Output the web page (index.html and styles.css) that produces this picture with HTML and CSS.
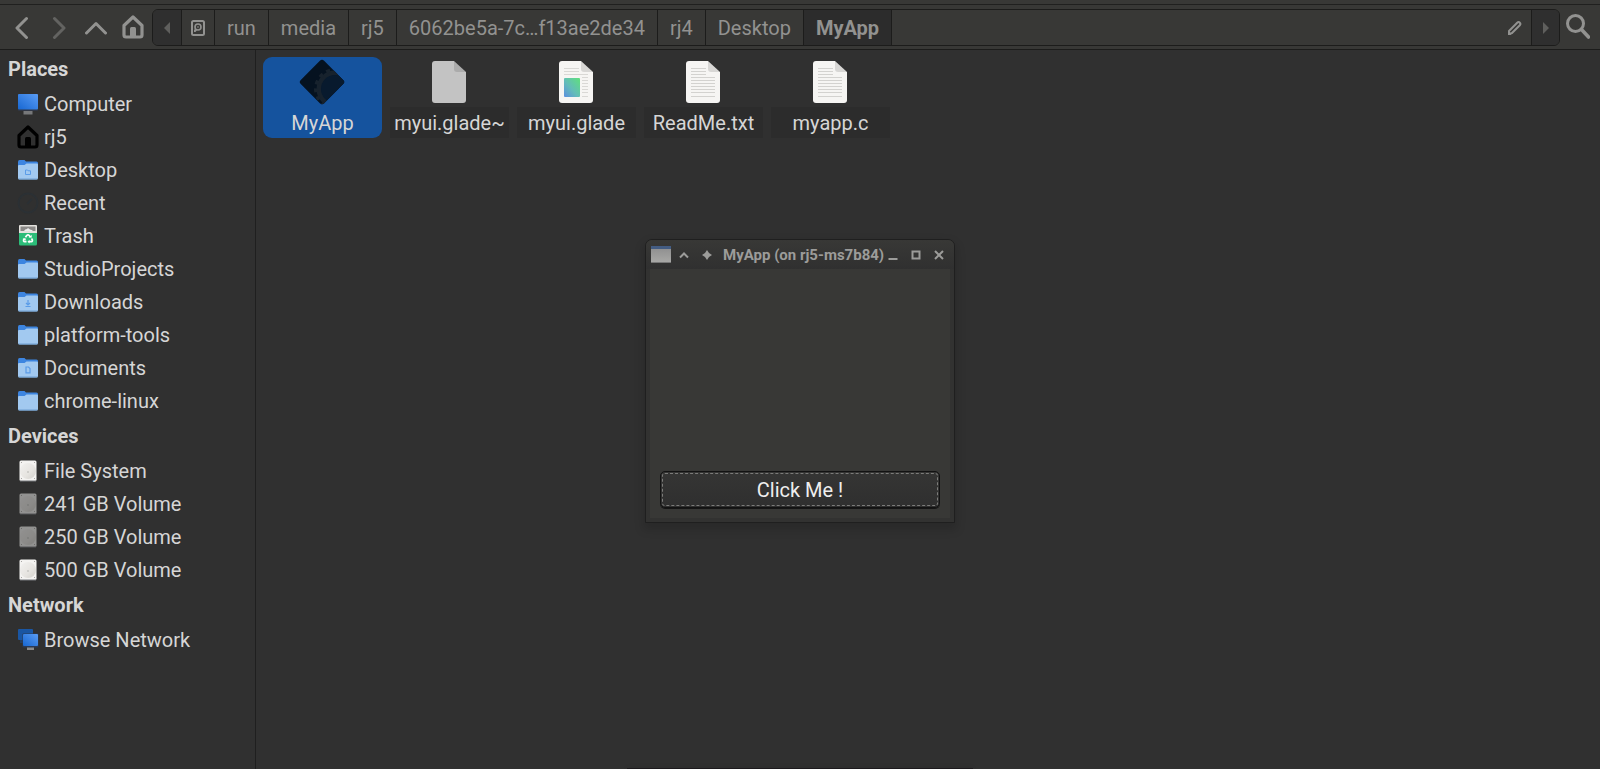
FILE: index.html
```html
<!DOCTYPE html>
<html lang="en">
<head>
<meta charset="utf-8">
<title>MyApp</title>
<link rel="stylesheet" href="styles.css">
</head>
<body>
<svg class="defs" aria-hidden="true">
  <defs>
    <linearGradient id="screen" x1="0" y1="1" x2="1" y2="0"><stop offset="0" stop-color="#1767d2"/><stop offset="1" stop-color="#5a9cf4"/></linearGradient>
    <linearGradient id="picture" x1="0" y1="1" x2="1" y2="0"><stop offset="0" stop-color="#5b8fe0"/><stop offset=".45" stop-color="#63bdb8"/><stop offset="1" stop-color="#5fe07c"/></linearGradient>
    <linearGradient id="winfill" x1="0" y1="0" x2="0" y2="1"><stop offset="0" stop-color="#8c8c8c"/><stop offset="1" stop-color="#a9a9a7"/></linearGradient>
    <linearGradient id="plate" x1="0" y1="0" x2="1" y2="1"><stop offset="0" stop-color="#f2f1ef"/><stop offset=".6" stop-color="#e6e4e0"/><stop offset="1" stop-color="#d2d0cb"/></linearGradient>
    <clipPath id="diamond"><rect x="6.500" y="6.500" width="33" height="33" rx="3" transform="rotate(45 23 23)"/></clipPath>
    <symbol id="home" viewBox="0 0 22 24"><path d="M2 10.5 11 2l9 8.500V20q0 2-2 2H4q-2 0-2-2z" fill="none" stroke="currentColor" stroke-width="3.200" stroke-linejoin="round"/><path d="M8 22v-8.500q0-1.500 1.500-1.500h3q1.500 0 1.500 1.500V22z" fill="currentColor"/></symbol>
    <symbol id="folder" viewBox="0 0 20 20"><path d="M0 2q0-2 1.500-2h5L8 1.500h10.500Q20 1.500 20 3v6H0z" fill="#3d85e0"/><path d="M0 6q0-1 1-1h5.500l2-1.500H19q1 0 1 1V18q0 1.500-1.500 1.500h-17Q0 19.500 0 18z" fill="#a2c9f0"/><path d="M.3 18.500q.4 1 1.200 1h17q1 0 1.200-1z" fill="#6e9fd2"/></symbol>
    <symbol id="disk" viewBox="0 0 18 22"><rect x=".5" y=".5" width="17" height="20.500" rx="1.500" fill="#f4f3f1"/><circle cx="9" cy="11" r="8" fill="url(#plate)"/><circle cx="9" cy="12" r="1" fill="#c9c7c3"/><path d="M2 2h1v1H2zM15 2h1v1h-1zM2 18h1v1H2zM15 18h1v1h-1z" fill="#aaa8a5"/><path d="M1 20.500h16v1H1z" fill="#77787c"/></symbol>
    <symbol id="page" viewBox="0 0 34 42"><path d="M3 0h19l12 11v28q0 3-3 3H3q-3 0-3-3V3q0-3 3-3z" fill="currentColor"/><path d="M22 0v8q0 3 3 3h9z" fill="#000" fill-opacity=".12"/></symbol>
  </defs>
</svg>

<div class="manager">
  <header class="toolbar">
    <nav class="nav-buttons" aria-label="Navigation">
      <button class="tool" aria-label="Back"><svg width="22" height="24" viewBox="0 0 22 24"><path d="M15.500 3.500 6 13l9.500 9.500" class="stroke"/></svg></button>
      <button class="tool tool-off" aria-label="Forward" disabled><svg width="22" height="24" viewBox="0 0 22 24"><path d="M6.500 3.500 16 13l-9.500 9.500" class="stroke"/></svg></button>
      <button class="tool" aria-label="Up"><svg width="22" height="24" viewBox="0 0 22 24"><path d="M1.500 18 11 8.500l9.500 9.500" class="stroke"/></svg></button>
      <button class="tool" aria-label="Home"><svg width="22" height="24"><use href="#home"/></svg></button>
    </nav>
    <div class="pathbar">
      <button class="crumb scroll scroll-left" aria-label="Scroll left"><svg width="6" height="12" viewBox="0 0 6 12"><path d="M6 0v12L0 6z" fill="currentColor"/></svg></button>
      <button class="crumb crumb-disk" aria-label="File System"><svg width="14" height="16" viewBox="0 0 14 16"><rect x="1" y="1" width="12" height="14" rx="1.500" fill="none" stroke="currentColor" stroke-width="2"/><circle cx="7" cy="7" r="3" fill="none" stroke="currentColor" stroke-width="1.600"/><path d="M3 9.500h3.500L4.500 12H3z" fill="currentColor"/><circle cx="7" cy="7" r=".8" fill="currentColor"/></svg></button>
      <button class="crumb">run</button>
      <button class="crumb">media</button>
      <button class="crumb">rj5</button>
      <button class="crumb">6062be5a-7c…f13ae2de34</button>
      <button class="crumb">rj4</button>
      <button class="crumb">Desktop</button>
      <button class="crumb crumb-current">MyApp</button>
      <button class="edit" aria-label="Edit location"><svg width="16" height="16" viewBox="0 0 16 16"><path d="M2 14v-3L10.200 2.800q1.400-1.400 2.600-.100t0 2.500L5 13l-3 1z" fill="none" stroke="currentColor" stroke-width="2" stroke-linejoin="round"/><path d="M1 11.500 4.500 15H1z" fill="currentColor"/></svg></button>
      <button class="crumb scroll scroll-right" aria-label="Scroll right"><svg width="6" height="12" viewBox="0 0 6 12"><path d="M0 0v12l6-6z" fill="currentColor"/></svg></button>
    </div>
    <button class="tool search" aria-label="Search"><svg width="24" height="25" viewBox="0 0 24 25"><circle cx="9.500" cy="9.500" r="8" fill="none" stroke="currentColor" stroke-width="3"/><path d="m15.500 15.500 7 7.500" stroke="currentColor" stroke-width="3.600" stroke-linecap="round"/></svg></button>
  </header>

  <div class="body">
    <aside class="sidebar">
      <h2 class="group">Places</h2>
      <ul class="places">
        <li><a class="place" href="#"><svg width="22" height="22" viewBox="0 0 22 22"><path d="M6.500 18h9v3.500h-9z" fill="#77787a"/><rect x="1" y="1" width="20" height="17" rx="1" fill="#303746"/><rect x="1" y="1" width="20" height="15.500" rx="1" fill="url(#screen)"/></svg>Computer</a></li>
        <li><a class="place" href="#"><svg class="black" width="22" height="24"><use href="#home"/></svg>rj5</a></li>
        <li><a class="place" href="#"><svg width="20" height="20" viewBox="0 0 20 20"><use href="#folder"/><path d="M7.500 10h2l.7.800h2.300v3.700h-5z" fill="none" stroke="#5b9ce8"/></svg>Desktop</a></li>
        <li><a class="place" href="#"><svg width="22" height="22" viewBox="0 0 22 22"><circle cx="11" cy="11" r="9.500" fill="none" stroke="#2b3034" stroke-width="2"/><path d="m10 12 5-5" stroke="#2b3034" stroke-width="2"/></svg>Recent</a></li>
        <li><a class="place" href="#"><svg width="18" height="22" viewBox="0 0 18 22"><rect y="0" width="18" height="9" rx="1" fill="#e4e2de"/><path d="M1.500 1.500h15V6h-15z" fill="#8b8987"/><path d="M5 6q1-2 3-2l1-1 2 1.500q2 0 3 1.500z" fill="#eee"/><path d="M0 8h18v11q0 1.500-1.500 1.500h-15Q0 20.500 0 19z" fill="#2cbd79"/><path d="m6.500 12.300 1.200-1.800q1.300-1.300 2.600 0l1 1.600M12.500 13.500l.8 1.300q.5 1.700-1 1.900H10M7.500 16.700H5.700q-1.600-.3-1-1.900l.6-1" fill="none" stroke="#fff" stroke-width="1.700"/><path d="m9.500 12.300 3 .4.400-2.800zM10.500 14.800l-2 1.900 2 1.900zM3.500 14l2.800-1 .7 2.600z" fill="#fff"/></svg>Trash</a></li>
        <li><a class="place" href="#"><svg width="20" height="20"><use href="#folder"/></svg>StudioProjects</a></li>
        <li><a class="place" href="#"><svg width="20" height="20" viewBox="0 0 20 20"><use href="#folder"/><path d="M10 8v5M8 11l2 2 2-2M7.500 14.500h5" fill="none" stroke="#5b9ce8" stroke-width="1.200"/></svg>Downloads</a></li>
        <li><a class="place" href="#"><svg width="20" height="20"><use href="#folder"/></svg>platform-tools</a></li>
        <li><a class="place" href="#"><svg width="20" height="20" viewBox="0 0 20 20"><use href="#folder"/><path d="M8 9h2.500L12 10.500v4.300H8z" fill="none" stroke="#5b9ce8" stroke-width="1.200"/></svg>Documents</a></li>
        <li><a class="place" href="#"><svg width="20" height="20"><use href="#folder"/></svg>chrome-linux</a></li>
      </ul>
      <h2 class="group">Devices</h2>
      <ul class="places">
        <li><a class="place" href="#"><svg width="18" height="22"><use href="#disk"/></svg>File System</a></li>
        <li><a class="place" href="#"><svg class="dim" width="18" height="22"><use href="#disk"/></svg>241 GB Volume</a></li>
        <li><a class="place" href="#"><svg class="dim" width="18" height="22"><use href="#disk"/></svg>250 GB Volume</a></li>
        <li><a class="place" href="#"><svg width="18" height="22"><use href="#disk"/></svg>500 GB Volume</a></li>
      </ul>
      <h2 class="group">Network</h2>
      <ul class="places">
        <li><a class="place" href="#"><svg width="22" height="22" viewBox="0 0 22 22"><rect x="1" y="0" width="15" height="11" rx="1" fill="#1a56a3"/><path d="M3 11h4v3H3z" fill="#263e5f"/><path d="M10 18h7v3h-7z" fill="#8b8b8b"/><rect x="5.500" y="4.500" width="16" height="14" rx="1" fill="#2b3a55"/><rect x="6" y="5" width="15" height="12" rx="1" fill="url(#screen)"/></svg>Browse Network</a></li>
      </ul>
    </aside>

    <main class="files">
      <a class="file selected" href="#"><span class="thumb"><svg width="46" height="46" viewBox="0 0 46 46"><g clip-path="url(#diamond)"><path d="M0 0h46v46H0z" fill="#051220"/><circle cx="36" cy="30" r="16" fill="none" stroke="#17222d" stroke-width="5"/><circle cx="36" cy="30" r="19" fill="none" stroke="#17222d" stroke-width="4" stroke-dasharray="4 4"/><circle cx="36" cy="30" r="14" fill="#081a2e"/></g></svg></span><span class="name">MyApp</span></a>
      <a class="file" href="#"><span class="thumb"><svg class="gray" width="34" height="42"><use href="#page"/></svg></span><span class="name">myui.glade~</span></a>
      <a class="file" href="#"><span class="thumb"><svg class="paper" width="34" height="42" viewBox="0 0 34 42"><use href="#page"/><path d="M5 7.500h15M5 10.500h15M5 13.500h24M23 16.500h6M23 19.500h6M23 22.500h6M23 25.500h6M23 28.500h6M23 31.500h6M23 35.500h6" stroke="#d9d8d5"/><rect x="5" y="17" width="16" height="19" rx="1" fill="url(#picture)"/></svg></span><span class="name">myui.glade</span></a>
      <a class="file" href="#"><span class="thumb"><svg class="paper" width="34" height="42" viewBox="0 0 34 42"><use href="#page"/><path d="M5 7.500h15M5 10.500h15M5 13.500h15M5 16.500h24M5 19.500h24M5 22.500h24M5 25.500h24M5 28.500h24M5 31.500h24M5 35.500h24" stroke="#d3d2cf"/></svg></span><span class="name">ReadMe.txt</span></a>
      <a class="file" href="#"><span class="thumb"><svg class="paper" width="34" height="42" viewBox="0 0 34 42"><use href="#page"/><path d="M5 7.500h15M5 10.500h15M5 13.500h15M5 16.500h24M5 19.500h24M5 22.500h24M5 25.500h24M5 28.500h24M5 31.500h24M5 35.500h24" stroke="#d3d2cf"/></svg></span><span class="name">myapp.c</span></a>
    </main>
  </div>
</div>

<section class="window" aria-label="MyApp">
  <div class="titlebar">
    <svg class="app-icon" width="20" height="17" viewBox="0 0 20 17"><rect width="20" height="17" fill="url(#winfill)"/><path d="M0 0h20v3H0z" fill="#435c82"/><path d="M0 16h20v1H0z" fill="#777"/></svg>
    <button class="win-btn" aria-label="Roll up"><svg width="10" height="10" viewBox="0 0 10 10"><path d="m1 7.500 4-4 4 4" fill="none" stroke="currentColor" stroke-width="2"/></svg></button>
    <button class="win-btn" aria-label="Stick"><svg width="10" height="10" viewBox="0 0 10 10"><path d="m5 0 2 3 3 2-3 2-2 3-2-3-3-2 3-2z" fill="currentColor"/></svg></button>
    <h1 class="title">MyApp (on rj5-ms7b84)</h1>
    <button class="win-btn" aria-label="Minimize"><svg width="10" height="10" viewBox="0 0 10 10"><path d="M.5 8h9v2h-9z" fill="currentColor"/></svg></button>
    <button class="win-btn" aria-label="Maximize"><svg width="10" height="10" viewBox="0 0 10 10"><path d="M1.500 1.500h7v7h-7z" fill="none" stroke="currentColor" stroke-width="2"/></svg></button>
    <button class="win-btn" aria-label="Close"><svg width="10" height="10" viewBox="0 0 10 10"><path d="m1 1 8 8M9 1 1 9" stroke="currentColor" stroke-width="2"/></svg></button>
  </div>
  <div class="content"><button class="click">Click Me !</button></div>
</section>
<div class="dock-edge"></div>
</body>
</html>
```
FILE: styles.css
```css
* { box-sizing: border-box; }

body {
  margin: 0;
  background: #303030;
  color: #d6d6d6;
  font: 20px/24px Roboto, "Liberation Sans", sans-serif;
  overflow: hidden;
}

button {
  margin: 0;
  padding: 0;
  border: 0;
  background: none;
  color: inherit;
  font: inherit;
}

svg { display: block; flex: none; }
a { color: inherit; text-decoration: none; }
.defs { position: absolute; width: 0; height: 0; }

.manager { display: flex; flex-direction: column; min-height: 100vh; }

.toolbar {
  display: flex;
  align-items: center;
  height: 50px;
  padding: 4px 10px 0 11px;
  background: linear-gradient(#383836 4px, #20201f 4px, #20201f 5px, #383836 5px);
  border-bottom: 1px solid #1c1c1b;
  color: #929290;
}
.nav-buttons { display: flex; gap: 15px; margin-right: 8px; }
.tool { flex: none; }
.tool-off { color: #636361; }
.stroke {
  fill: none;
  stroke: currentColor;
  stroke-width: 3;
  stroke-linecap: round;
  stroke-linejoin: round;
}

.pathbar {
  display: flex;
  flex: 1;
  height: 37px;
  margin-top: 2px;
  border: 1px solid #1c1c1b;
  border-radius: 6px;
  overflow: hidden;
}
.crumb {
  display: flex;
  align-items: center;
  justify-content: center;
  padding: 0 12px;
  border-right: 1px solid #1c1c1b;
  white-space: nowrap;
}
.crumb-disk { width: 33px; padding: 0; }
.crumb-current { background: #2c2c2c; font-weight: 700; }
.scroll { width: 29px; padding: 0; background: #2f2f2f; color: #5f5f5d; }
.scroll-right { width: 28px; border-right: 0; border-left: 1px solid #1c1c1b; }
.edit { margin-left: auto; padding: 0 8px; }
.search { margin-left: 6px; }

.body { display: flex; flex: 1; }
.sidebar { flex: none; width: 256px; border-right: 1px solid #1f1f1f; }
.group {
  margin: 0;
  padding: 2px 8px 0;
  font-size: 20px;
  line-height: 35px;
  font-weight: 700;
}
.places { margin: 0; padding: 0; list-style: none; }
.place {
  display: grid;
  grid-template-columns: 22px 1fr;
  align-items: center;
  gap: 5px;
  height: 33px;
  padding-left: 17px;
}
.place svg { justify-self: center; }
.black { color: #000; }
.dim { opacity: .5; }

.files {
  display: flex;
  flex: 1;
  flex-wrap: wrap;
  align-content: flex-start;
  gap: 8px;
  padding: 7px;
}
.file { width: 119px; text-align: center; }
.thumb {
  display: flex;
  align-items: center;
  justify-content: center;
  height: 50px;
  padding-right: 2px;
}
.name {
  display: block;
  height: 31px;
  background: #2c2c2c;
  line-height: 32px;
}
.selected { border-radius: 9px; background: #15539e; }
.selected .name { background: none; }
.gray { color: #c3c3c3; }
.paper { color: #f6f5f3; }

.window {
  position: absolute;
  top: 239px;
  left: 50%;
  width: 310px;
  transform: translateX(-50%);
  border: 1px solid #1f1f1f;
  border-radius: 7px 7px 0 0;
  background: #323231;
  box-shadow: 0 5px 10px 2px rgba(0, 0, 0, .14);
}
.titlebar {
  display: flex;
  align-items: center;
  height: 29px;
  padding: 0 10px 0 5px;
  gap: 13px;
  border-radius: 6px 6px 0 0;
  background: linear-gradient(#383836, #303030);
  color: #9c9c9a;
}
.app-icon { margin-right: -5px; }
.title {
  flex: 1;
  min-width: 0;
  margin: 0 -4px 0 -2px;
  font-size: 15px;
  font-weight: 700;
  white-space: nowrap;
}
.content {
  display: flex;
  align-items: flex-end;
  height: 249px;
  margin: 0 4px 4px;
  padding: 10px;
  background: #383836;
}
.click {
  flex: 1;
  height: 37px;
  border: 1px solid #121212;
  border-radius: 5px;
  outline: 1px dashed #7c7c7a;
  outline-offset: -3px;
  background: linear-gradient(#353534, #2f2f2f);
  box-shadow: 0 1px #151515;
  color: #eee;
}

.dock-edge {
  position: absolute;
  bottom: 0;
  left: 50%;
  width: 346px;
  height: 1px;
  transform: translateX(-50%);
  background: #1c1a1d;
  box-shadow: 0 0 5px rgba(0, 0, 0, .2);
}
```
